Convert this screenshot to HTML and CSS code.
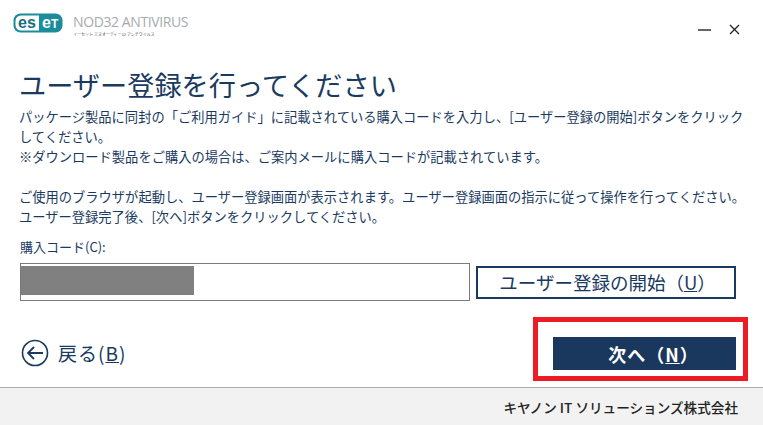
FILE: index.html
```html
<!DOCTYPE html>
<html lang="ja">

<head>
  <meta charset="UTF-8" />
  <meta name="viewport" content="width=device-width, initial-scale=1.0" />
  <title>ESET NOD32 ANTIVIRUS</title>
  <link rel="stylesheet" href="styles.css">
</head>

<body>
  <div class="window">
    <!-- Title bar -->
    <div class="top-bar">
      <div class="logo">
        <svg class="eset-mark" width="51" height="21" viewBox="0 0 51 21">
          <rect x="0.5" y="0.5" width="49" height="19" rx="7" fill="#1a8c9c" />
          <path d="M8 2.5 H26 V17.5 H8 A5.5 5.5 0 0 1 2.5 12 V8 A5.5 5.5 0 0 1 8 2.5 Z" fill="#fff" />
          <text x="5" y="15" class="mark-dark">es</text>
          <text x="29" y="15" class="mark-light">e</text>
          <text x="38" y="15" class="mark-cap">T</text>
        </svg>
        <div class="product">
          <div class="product-name">NOD32 ANTIVIRUS</div>
          <div class="product-kana">イーセット エヌオーディー32 アンチウイルス</div>
        </div>
      </div>
      <div class="win-controls">
        <span class="win-min"></span>
        <svg width="11" height="11" viewBox="0 0 11 11">
          <path d="M1 1 L10 10 M10 1 L1 10" stroke="#222" stroke-width="1.3" fill="none" />
        </svg>
      </div>
    </div>

    <div class="content">
      <h1>ユーザー登録を行ってください</h1>
      <div class="message">
        <p>パッケージ製品に同封の「ご利用ガイド」に記載されている購入コードを入力し、[ユーザー登録の開始]ボタンをクリック<br>してください。</p>
        <p>※ダウンロード製品をご購入の場合は、ご案内メールに購入コードが記載されています。</p>
        <p class="gap">ご使用のブラウザが起動し、ユーザー登録画面が表示されます。ユーザー登録画面の指示に従って操作を行ってください。</p>
        <p>ユーザー登録完了後、[次へ]ボタンをクリックしてください。</p>
      </div>

      <label class="code-label">購入コード(C):</label>
      <div class="code-row">
        <div class="code-input"><div class="masked"></div></div>
        <button class="start-btn">ユーザー登録の開始（<u>U</u>）</button>
      </div>
    </div>

    <div class="nav-row">
      <div class="back">
        <svg width="28" height="28" viewBox="0 0 28 28">
          <circle cx="14" cy="14" r="12.5" stroke="#1a3a5f" stroke-width="1.6" fill="none" />
          <path d="M22 14 H7 M13 8 L7 14 L13 20" stroke="#1a3a5f" stroke-width="1.8" fill="none" />
        </svg>
        <span>戻る(<u>B</u>)</span>
      </div>
      <div class="next-wrap">
        <button class="next-btn">次へ（<u>N</u>）</button>
        <div class="highlight"></div>
      </div>
    </div>

    <div class="footer">キヤノン IT ソリューションズ株式会社</div>
  </div>
</body>

</html>
```

FILE: styles.css
```css
body {
  margin: 0;
  padding: 0;
  background-color: #fff;
  font-family: "Noto Sans CJK JP", "Noto Sans", sans-serif;
  color: #1a3a5f;
}

.window {
  width: 763px;
  height: 425px;
  display: flex;
  flex-direction: column;
  overflow: hidden;
}

.top-bar {
  height: 48px;
  padding: 13px 23px 0 13px;
  box-sizing: border-box;
  display: flex;
  justify-content: space-between;
  align-items: flex-start;
  flex-shrink: 0;
}

.logo {
  display: flex;
  gap: 9px;
}

.eset-mark {
  display: block;
}

.mark-dark,
.mark-light {
  font-family: "Liberation Sans", sans-serif;
  font-size: 16px;
  font-weight: 700;
}

.mark-dark {
  fill: #15707e;
}

.mark-light {
  fill: #fff;
}

.mark-cap {
  font-family: "Liberation Sans", sans-serif;
  font-size: 12px;
  font-weight: 700;
  fill: #fff;
}

.product {
  color: #a6abaf;
  margin-top: 1px;
}

.product-name {
  font-family: "Open Sans", sans-serif;
  font-size: 14px;
  line-height: 15px;
  letter-spacing: -0.4px;
}

.product-kana {
  font-size: 4px;
  line-height: 6px;
  margin-top: 2px;
  color: #555;
  white-space: nowrap;
}

.win-controls {
  display: flex;
  align-items: center;
  gap: 18px;
  margin-top: 11px;
}

.win-min {
  width: 13px;
  height: 2px;
  background-color: #666;
}

.content {
  padding: 0 20px;
  flex-shrink: 0;
}

h1 {
  margin: 16px 0 0 -1px;
  font-size: 27.2px;
  font-weight: 400;
  line-height: 40px;
  white-space: nowrap;
}

.message {
  margin: 3px 0 0 -1px;
  font-size: 13.27px;
  line-height: 20px;
}

.message p {
  margin: 0;
  white-space: nowrap;
}

.message .gap {
  margin-top: 20px;
}

.code-label {
  display: block;
  margin-top: 11px;
  font-size: 13px;
  line-height: 18px;
}

.code-row {
  display: flex;
  align-items: center;
  gap: 6px;
  margin-top: 7px;
}

.code-input {
  width: 450px;
  height: 38px;
  box-sizing: border-box;
  border: 1px solid #7a7a7a;
  padding: 2px 0;
}

.masked {
  width: 173px;
  height: 29px;
  background-color: #808080;
}

.start-btn {
  width: 260px;
  height: 33px;
  padding: 0 0 0 3px;
  box-sizing: border-box;
  background-color: #fff;
  color: #1a3a5f;
  border: 2px solid #1a3a5f;
  font-family: inherit;
  font-size: 18.5px;
  line-height: 1;
}

.nav-row {
  flex: 1;
  display: flex;
  justify-content: space-between;
  align-items: flex-start;
  padding: 36px 27px 0 21px;
}

.back {
  display: flex;
  align-items: center;
  gap: 9px;
  font-size: 19px;
  line-height: 28px;
  margin-top: 2px;
  letter-spacing: 1px;
}

.back svg {
  display: block;
}

.next-wrap {
  position: relative;
}

.next-btn {
  display: block;
  width: 183px;
  height: 33px;
  padding: 0 0 0 18px;
  background-color: #1a375e;
  color: #fff;
  border: none;
  font-family: inherit;
  font-size: 18px;
  font-weight: 700;
  letter-spacing: 1px;
}

.highlight {
  position: absolute;
  top: -20px;
  left: -20px;
  width: 205px;
  height: 54px;
  border: 5px solid #ed1c24;
}

.footer {
  height: 38px;
  box-sizing: border-box;
  flex-shrink: 0;
  border-top: 1px solid #ababab;
  background-color: #f2f2f2;
  padding-right: 25px;
  color: #222;
  font-size: 13.6px;
  font-weight: 500;
  line-height: 38px;
  text-align: right;
}
```
